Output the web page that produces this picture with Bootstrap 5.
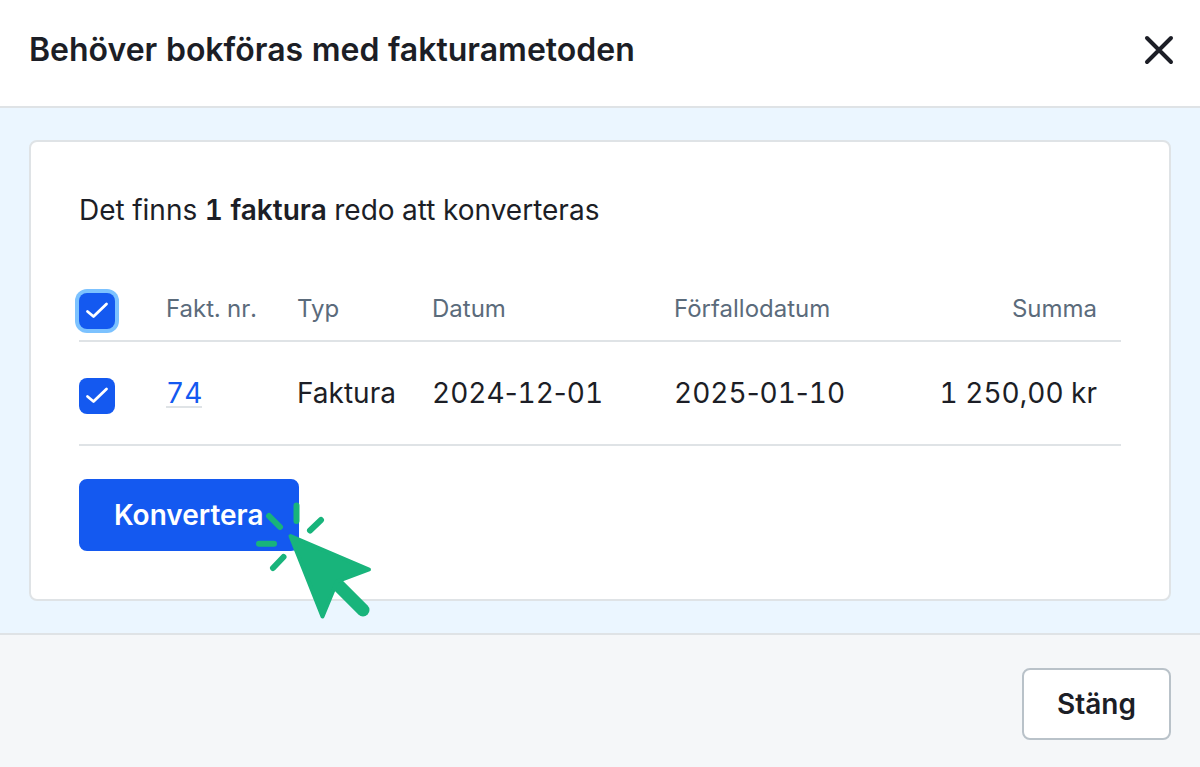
<!DOCTYPE html>
<html lang="sv">
<head>
<meta charset="utf-8">
<meta name="viewport" content="width=device-width, initial-scale=1">
<title>Behöver bokföras med fakturametoden</title>
<link href="https://cdn.jsdelivr.net/npm/bootstrap@5.3.0/dist/css/bootstrap.min.css" rel="stylesheet">
<style>
  body { font-family: Inter, "Liberation Sans", sans-serif; font-size: 28px; line-height: 40px; font-variant-numeric: tabular-nums; color: #1c1e26; background: #f5f7f9; }
  .dialog-head { padding: 30px 23px 36px 29px; border-bottom: 2px solid #dfe3e6; }
  .dialog-head h1 { font-size: 32px; line-height: 40px; font-weight: 600; }
  .close-btn { width: 36px; height: 36px; color: #1c1e26; }
  .dialog-main { padding: 32px 29px; background: #ebf6ff; }
  .panel { border: 2px solid #dfe3e6; border-radius: 8px; padding: 48px; }
  .panel p { margin-bottom: 46px; }
  .invoices { --bs-table-bg: transparent; color: inherit; table-layout: fixed; margin-bottom: 33px; }
  .invoices th, .invoices td { padding: 0 24px; border-bottom: 2px solid #dfe3e6; vertical-align: middle; color: #1c1e26; white-space: nowrap; }
  .invoices th { height: 65px; padding-top: 2px; font-size: 24px; font-weight: 400; color: #5b6b7b; }
  .invoices td { height: 104px; }
  .invoices th:first-child, .invoices td:first-child { padding: 0; }
  .col-pick { width: 63px; } .col-nr { width: 131px; } .col-type { width: 135px; } .col-date { width: 242px; }
  .dash { font-variant-numeric: normal; }
  .invoices .form-check-input { display: block; float: none; margin: 5px 0 0; width: 36px; height: 36px; border: 0; border-radius: 8px; }
  .invoices .form-check-input:checked { background-color: #1459f0; background-size: 36px 36px;
    background-image: url("data:image/svg+xml,%3Csvg xmlns='http://www.w3.org/2000/svg' viewBox='0 0 36 36'%3E%3Cpath d='M8.500 18.500l6 5L27.500 11' fill='none' stroke='%23fff' stroke-width='2.800' stroke-linecap='round' stroke-linejoin='round'/%3E%3C/svg%3E"); }
  .invoices .ringed { box-shadow: 0 0 0 4px #7cc2ff; }
  .invoices a { color: #1459f0; text-decoration: none; display: inline-block; line-height: 26px; border-bottom: 2px solid #dfe3e6; }
  .act { font-size: 28px; line-height: 40px; font-weight: 600; padding: 14px 33px; border: 2px solid #1459f0; border-radius: 8px; }
  .act-primary, .act-primary:hover { background: #1459f0; color: #fff; }
  .act-plain, .act-plain:hover { background: #fff; color: #1c1e26; border-color: #b9c2c9; }
  .click-pointer { position: absolute; left: 174px; top: 19px; pointer-events: none; }
  .dialog-foot { padding: 33px 29px 28px; border-top: 2px solid #dfe3e6; background: #f5f7f9; }
</style>
</head>
<body>
<header class="dialog-head bg-white d-flex justify-content-between align-items-center">
  <h1 class="m-0">Behöver bokföras med fakturametoden</h1>
  <button type="button" class="close-btn btn p-0 border-0 d-flex" aria-label="Stäng dialog">
    <svg width="36" height="36" viewBox="0 0 36 36" fill="none" stroke="currentColor" stroke-width="4" stroke-linecap="round"><path d="M6 6L30 30M30 6L6 30"/></svg>
  </button>
</header>
<main class="dialog-main">
  <section class="panel bg-white">
    <p>Det finns <strong class="fw-semibold">1 faktura</strong> redo att konverteras</p>
    <table class="invoices table">
      <colgroup><col class="col-pick"><col class="col-nr"><col class="col-type"><col class="col-date"><col class="col-date"><col></colgroup>
      <thead>
        <tr>
          <th scope="col"><input class="form-check-input ringed" type="checkbox" checked aria-label="Markera alla"></th>
          <th scope="col">Fakt. nr.</th>
          <th scope="col">Typ</th>
          <th scope="col">Datum</th>
          <th scope="col">Förfallodatum</th>
          <th scope="col" class="text-end">Summa</th>
        </tr>
      </thead>
      <tbody>
        <tr>
          <td><input class="form-check-input" type="checkbox" checked aria-label="Markera faktura 74"></td>
          <td><a href="#">74</a></td>
          <td>Faktura</td>
          <td>2024<span class="dash">-</span>12<span class="dash">-</span>01</td>
          <td>2025<span class="dash">-</span>01<span class="dash">-</span>10</td>
          <td class="text-end">1 250,00 kr</td>
        </tr>
      </tbody>
    </table>
    <div class="position-relative d-flex">
      <button type="button" class="act act-primary btn">Konvertera</button>
      <svg class="click-pointer" width="124" height="124" viewBox="253 498 124 124" aria-hidden="true">
        <g stroke="#18b47b" stroke-width="6" stroke-linecap="round" fill="none">
          <path d="M296.500 505.500V521M269 516L280 527M259 543.800H274M273 568L283.500 557M310 530.500L321 520"/>
          <path d="M337 584L363 610" stroke-width="13"/>
        </g>
        <path d="M290.500 536L369 569.500L337 581.500L322.500 616.500Z" fill="#18b47b" stroke="#18b47b" stroke-width="4" stroke-linejoin="round"/>
      </svg>
    </div>
  </section>
</main>
<footer class="dialog-foot d-flex justify-content-end">
  <button type="button" class="act act-plain btn">Stäng</button>
</footer>
<script src="https://cdn.jsdelivr.net/npm/bootstrap@5.3.0/dist/js/bootstrap.bundle.min.js"></script>
</body>
</html>
